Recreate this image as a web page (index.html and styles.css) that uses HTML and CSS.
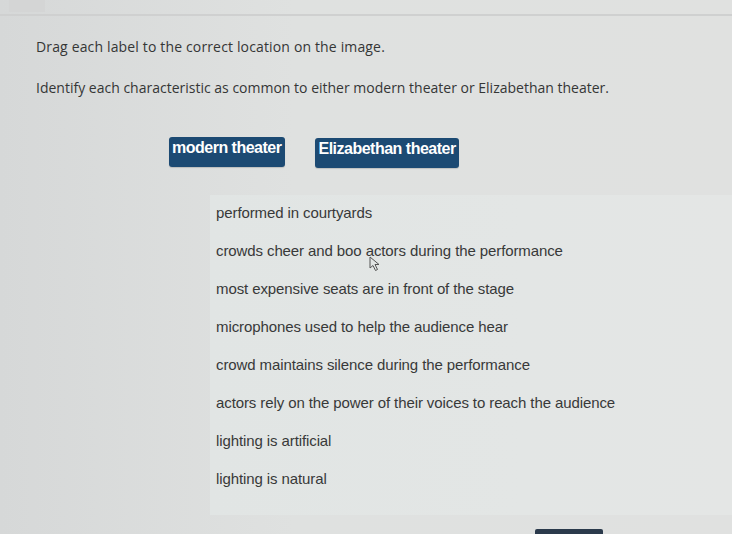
FILE: index.html
```html
<!DOCTYPE html>
<html lang="en">
<head>
<meta charset="utf-8">
<title>Drag and drop</title>
<link rel="stylesheet" href="styles.css">
</head>
<body>
<div class="topbar"><div class="tab"></div></div>
<main class="question">
  <p class="prompt first">Drag each label to the correct location on the image.</p>
  <p class="prompt">Identify each characteristic as common to either modern theater or Elizabethan theater.</p>
  <div class="bins">
    <div class="bin bin-modern">modern theater</div>
    <div class="bin bin-eliz">Elizabethan theater</div>
  </div>
  <div class="pool">
    <ul class="items">
      <li>performed in courtyards</li>
      <li>crowds cheer and boo actors during the performance</li>
      <li>most expensive seats are in front of the stage</li>
      <li>microphones used to help the audience hear</li>
      <li>crowd maintains silence during the performance</li>
      <li>actors rely on the power of their voices to reach the audience</li>
      <li>lighting is artificial</li>
      <li>lighting is natural</li>
    </ul>
    <svg class="cursor" width="12" height="16" viewBox="0 0 12 16">
      <path d="M1 1 L1 12 L4 9.5 L6.5 14.5 L8.5 13.5 L6 8.5 L10 8.5 Z" fill="none" stroke="#555" stroke-width="1" stroke-linejoin="round"/>
    </svg>
  </div>
  <div class="footer"><div class="next"></div></div>
</main>
</body>
</html>
```

FILE: styles.css
```css
html, body {
  margin: 0;
  padding: 0;
}

body {
  width: 732px;
  height: 534px;
  overflow: hidden;
  background: linear-gradient(90deg, #d6d8d8 0%, #dfe1e0 40%, #e0e1e0 100%);
  font-family: "Open Sans", "Liberation Sans", sans-serif;
  color: #353636;
}

.topbar {
  height: 14px;
  border-bottom: 2px solid #cfd0d0;
  display: flex;
  padding-left: 9px;
}

.tab {
  width: 36px;
  height: 12px;
  background: #d4d5d5;
}

.question {
  padding-left: 36px;
  position: relative;
}

.prompt {
  margin: 0;
  font-size: 14px;
  line-height: 18px;
  color: #353636;
}

.prompt.first {
  margin-top: 22px;
  letter-spacing: 0.15px;
}

.prompt + .prompt {
  margin-top: 23px;
}

.bins {
  display: flex;
  align-items: flex-start;
  gap: 30px;
  margin-top: 40px;
  margin-left: 133px;
}

.bin {
  background: #1c4a73;
  color: #fff;
  white-space: nowrap;
  font-family: "Liberation Sans", Arial, sans-serif;
  font-weight: bold;
  font-size: 16px;
  letter-spacing: -0.5px;
  line-height: 18px;
  padding: 2px 4px 10px 3px;
  border-radius: 3px;
  box-shadow: 0 1px 1px rgba(0, 0, 0, 0.15);
}

.bin-eliz {
  margin-top: 1px;
  padding-right: 3px;
}

.pool {
  position: relative;
  margin-top: 27px;
  margin-left: 174px;
  height: 320px;
  background: linear-gradient(90deg, #e1e5e4 0%, #e3e6e5 60%, #e4e6e5 100%);
}

.items {
  list-style: none;
  margin: 0;
  padding: 9px 0 0 6px;
  display: flex;
  flex-direction: column;
  gap: 20px;
}

.items li {
  font-family: "Liberation Sans", Arial, sans-serif;
  font-size: 15px;
  line-height: 18px;
  letter-spacing: -0.1px;
  color: #383939;
}

.cursor {
  position: absolute;
  left: 159px;
  top: 61px;
}

.footer {
  display: flex;
  padding-left: 499px;
  margin-top: 14px;
}

.next {
  width: 68px;
  height: 6px;
  background: #2b3a4c;
  border-radius: 2px 2px 0 0;
}
```
